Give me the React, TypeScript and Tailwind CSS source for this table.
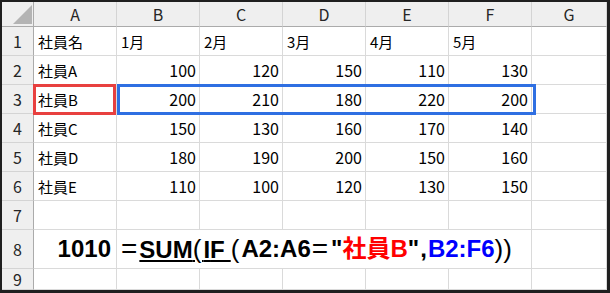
const columns = ["A", "B", "C", "D", "E", "F", "G"]
const months = ["1月", "2月", "3月", "4月", "5月"]

const staff: [string, number[]][] = [
  ["社員A", [100, 120, 150, 110, 130]],
  ["社員B", [200, 210, 180, 220, 200]],
  ["社員C", [150, 130, 160, 170, 140]],
  ["社員D", [180, 190, 200, 150, 160]],
  ["社員E", [110, 100, 120, 130, 150]],
]

const colHead =
  "flex items-center justify-center bg-[#efefef] border-r border-b border-r-[#d4d4d4] border-b-[#ababab] text-[16px] leading-none text-[#262626]"
const rowHead =
  "flex items-center justify-center bg-[#efefef] border-r border-b border-r-[#ababab] border-b-[#d4d4d4] text-[16px] leading-none text-[#262626]"
const cell = "border-r border-b border-[#dadada] bg-white"
const textCell = `${cell} flex items-center pl-[4px] text-[15px] leading-none text-black`
const numCell = `${cell} flex items-center justify-end pr-[3px] text-[16px] leading-none text-black`

const Corner = () => (
  <div className="bg-[#efefef] border-r border-b border-[#ababab]">
    <svg width="31" height="24" viewBox="0 0 31 24">
      <polygon points="11,22 30,22 30,3" fill="#b4b4b4" />
    </svg>
  </div>
)

const Formula = () => (
  <div className="col-span-5 flex items-center pl-[4px] border-r border-b border-[#dadada] bg-white font-['Liberation_Sans','Noto_Sans_CJK_JP',sans-serif] text-[24px] font-bold leading-none whitespace-nowrap text-black">
    <span className="font-normal text-[28px] tracking-[2px]">=</span>
    <span className="underline decoration-2 underline-offset-[2px]">
      SUM<span className="font-normal text-[26px] tracking-[2px]">(</span>I<span className="tracking-[6px]">F</span>
    </span>
    <span className="font-normal text-[26px] tracking-[2px]">(</span>
    <span>A2:A6</span>
    <span className="font-normal text-[28px] tracking-[3px] ml-[1px]">=</span>
    <span>"</span>
    <span className="text-[#ff0000]">社員B</span>
    <span className="tracking-[1px]">",</span>
    <span className="text-[#0000ff]">B2:F6</span>
    <span className="font-normal text-[26px]">))</span>
  </div>
)

export default function App() {
  return (
    <div className="w-[610px] h-[293px] bg-[#1f1f1f] pt-[2px] pl-[2px] pr-[3px] pb-[3px] font-['Noto_Sans_CJK_JP',sans-serif]">
      <div className="relative w-full h-full overflow-hidden bg-white grid grid-cols-[32px_repeat(6,83px)_1fr] grid-rows-[25px_repeat(7,29px)_39px_1fr]">
        <Corner />
        {columns.map((c) => (
          <div key={c} className={colHead}>
            {c}
          </div>
        ))}

        {/* row 1: headings */}
        <div className={rowHead}>1</div>
        <div className={textCell}>社員名</div>
        {months.map((m) => (
          <div key={m} className={textCell}>
            {m}
          </div>
        ))}
        <div className={cell} />

        {staff.map(([name, values], i) => (
          <div key={name} className="contents">
            <div className={rowHead}>{i + 2}</div>
            <div className={textCell}>{name}</div>
            {values.map((v, j) => (
              <div key={j} className={numCell}>
                {v}
              </div>
            ))}
            <div className={cell} />
          </div>
        ))}

        {/* row 7 */}
        <div className={rowHead}>7</div>
        {columns.map((c) => (
          <div key={c} className={cell} />
        ))}

        {/* row 8: result and formula */}
        <div className={rowHead}>8</div>
        <div className={`${cell} flex items-center justify-end pr-[5px] font-['Liberation_Sans',sans-serif] text-[24px] font-bold leading-none text-black`}>
          1010
        </div>
        <Formula />
        <div className={cell} />

        {/* row 9 */}
        <div className={rowHead}>9</div>
        {columns.map((c) => (
          <div key={c} className={cell} />
        ))}

        {/* highlight boxes */}
        <div className="absolute left-[31px] top-[82px] w-[83px] h-[31px] border-[3px] border-[#e8403f]" />
        <div className="absolute left-[115px] top-[82px] w-[419px] h-[31px] border-[3px] border-[#2f6fe2]" />
      </div>
    </div>
  )
}
